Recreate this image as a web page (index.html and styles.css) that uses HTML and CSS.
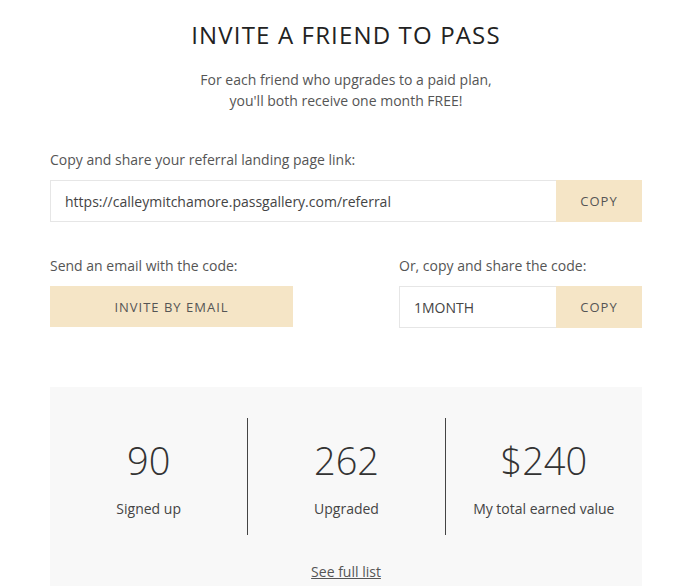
FILE: index.html
```html
<!DOCTYPE html>
<html>
<head>
<meta charset="utf-8">
<link rel="stylesheet" href="styles.css">
</head>
<body>
<div class="page">
  <h1 class="title">INVITE A FRIEND TO PASS</h1>
  <p class="subtitle">For each friend who upgrades to a paid plan,<br>you'll both receive one month FREE!</p>

  <div class="field">
    <div class="label">Copy and share your referral landing page link:</div>
    <div class="group">
      <div class="input">https://calleymitchamore.passgallery.com/referral</div>
      <button class="btn copy">COPY</button>
    </div>
  </div>

  <div class="two">
    <div class="field">
      <div class="label">Send an email with the code:</div>
      <button class="btn invite">INVITE BY EMAIL</button>
    </div>
    <div class="field">
      <div class="label">Or, copy and share the code:</div>
      <div class="group">
        <div class="input">1MONTH</div>
        <button class="btn copy">COPY</button>
      </div>
    </div>
  </div>

  <div class="stats">
    <div class="cols">
      <div class="col">
        <div class="num">90</div>
        <div class="cap">Signed up</div>
      </div>
      <div class="col">
        <div class="num">262</div>
        <div class="cap">Upgraded</div>
      </div>
      <div class="col">
        <div class="num">$240</div>
        <div class="cap">My total earned value</div>
      </div>
    </div>
    <a class="more" href="#">See full list</a>
  </div>
</div>
</body>
</html>
```

FILE: styles.css
```css
* { box-sizing: border-box; }
html, body { margin: 0; padding: 0; background: #fff; }
body {
  font-family: "Open Sans", "Liberation Sans", sans-serif;
  color: #555;
  font-size: 14px;
}
.page {
  width: 592px;
  margin-left: 50px;
  padding-top: 20px;
}
.title {
  margin: 0;
  text-align: center;
  font-size: 24px;
  line-height: 29px;
  font-weight: 400;
  letter-spacing: 1.15px;
  color: #222;
}
.subtitle {
  margin: 20px 0 0;
  text-align: center;
  font-size: 14px;
  line-height: 21px;
  color: #555;
}
.field { display: flex; flex-direction: column; }
.page > .field { margin-top: 39px; }
.label {
  font-size: 14px;
  line-height: 20px;
  margin-bottom: 10px;
  color: #555;
}
.group { display: flex; height: 42px; }
.input {
  flex: 1;
  border: 1px solid #e6e6e6;
  border-right: none;
  padding: 0 14px;
  display: flex;
  align-items: center;
  font-size: 14px;
  color: #444;
  background: #fff;
}
.btn {
  border: none;
  background: #f5e5c6;
  color: #555;
  font-family: "Open Sans", "Liberation Sans", sans-serif;
  font-size: 13px;
  letter-spacing: 1px;
  padding: 0;
  cursor: pointer;
}
.copy { width: 86px; height: 42px; }
.invite { height: 41px; width: 243px; }
.two {
  display: grid;
  grid-template-columns: 243px 243px;
  justify-content: space-between;
  margin-top: 34px;
}
.stats {
  margin-top: 59px;
  background: #f8f8f8;
  padding-top: 31px;
  height: 210px;
  text-align: center;
}
.cols {
  display: grid;
  grid-template-columns: 1fr 1fr 1fr;
}
.col {
  height: 117px;
  padding-top: 18px;
}
.col + .col { border-left: 1px solid #444; }
.num {
  font-size: 38px;
  line-height: 48px;
  font-weight: 300;
  color: #333;
}
.cap {
  margin-top: 15px;
  font-size: 14px;
  line-height: 20px;
  color: #444;
}
.more {
  display: inline-block;
  margin-top: 27px;
  font-size: 14px;
  line-height: 20px;
  color: #555;
  text-decoration: underline;
}
```
